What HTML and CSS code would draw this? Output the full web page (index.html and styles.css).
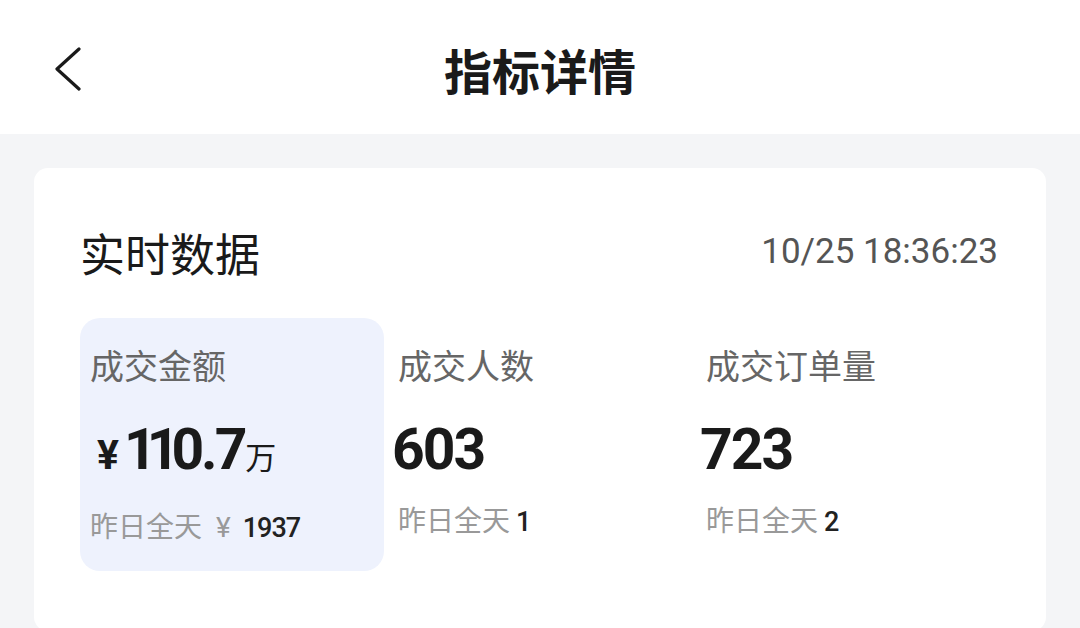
FILE: index.html
```html
<!DOCTYPE html>
<html lang="zh-CN">
<head>
    <meta charset="UTF-8">
    <meta name="viewport" content="width=device-width, initial-scale=1.0">
    <title>指标详情</title>
    <link rel="stylesheet" href="styles.css">
</head>
<body>
    <div class="topbar">
        <div class="back">
            <svg width="30" height="44" viewBox="0 0 30 44">
                <polyline points="25,2 3,22 25,42" fill="none" stroke="#1a1a1a" stroke-width="3.2" stroke-linecap="round" stroke-linejoin="round"/>
            </svg>
        </div>
        <h1>指标详情</h1>
        <div></div>
    </div>

    <div class="page">
        <div class="card">
            <div class="card-head">
                <h2>实时数据</h2>
                <span class="time">10/25 18:36:23</span>
            </div>
            <div class="metrics">
                <div class="metric active">
                    <div class="label">成交金额</div>
                    <div class="value"><span class="cur">¥</span><span class="narrow">11</span>0.7<span class="unit">万</span></div>
                    <div class="sub">昨日全天<span class="sym">¥</span><span class="num">1937</span></div>
                </div>
                <div class="metric">
                    <div class="label">成交人数</div>
                    <div class="value">603</div>
                    <div class="sub">昨日全天<span class="num">1</span></div>
                </div>
                <div class="metric">
                    <div class="label">成交订单量</div>
                    <div class="value">723</div>
                    <div class="sub">昨日全天<span class="num">2</span></div>
                </div>
            </div>
        </div>
    </div>
</body>
</html>
```

FILE: styles.css
```css
body {
    margin: 0;
    font-family: "Noto Sans CJK SC", "Noto Sans", sans-serif;
    background-color: #f4f5f7;
    color: #1a1a1a;
    height: 628px;
    overflow: hidden;
}
.topbar {
    display: grid;
    grid-template-columns: 1fr auto 1fr;
    align-items: center;
    height: 134px;
    background-color: #fff;
}
.topbar .back {
    padding-left: 54px;
    display: flex;
    align-items: center;
    padding-top: 4px;
}
.topbar h1 {
    margin: 0;
    font-size: 48px;
    font-weight: 700;
    line-height: 1;
    padding-top: 4px;
}
.page {
    padding: 34px 34px 0;
}
.card {
    background-color: #fff;
    border-radius: 14px;
    padding: 41px 48px 60px 46px;
}
.card-head {
    display: flex;
    justify-content: space-between;
    align-items: center;
    height: 84px;
}
.card-head h2 {
    margin: 0;
    font-size: 45px;
    font-weight: 400;
    line-height: 1;
    padding-top: 2px;
}
.card-head .time {
    font-family: Roboto, sans-serif;
    font-size: 35px;
    color: #555;
}
.metrics {
    display: grid;
    grid-template-columns: repeat(3, 1fr);
    margin-top: 25px;
}
.metric {
    height: 253px;
    box-sizing: border-box;
    padding: 23px 10px 0 12px;
    border-radius: 20px;
    margin-right: 2px;
}
.metric:last-child {
    padding-left: 14px;
}
.metric.active {
    background-color: #eef2fd;
    padding-left: 10px;
}
.metric .label {
    font-size: 34px;
    line-height: 48px;
    color: #666;
    margin-bottom: 26px;
}
.metric .value {
    font-family: Roboto, sans-serif;
    font-size: 57px;
    font-weight: 700;
    line-height: 70px;
    letter-spacing: -2px;
    margin-bottom: 14px;
    margin-left: -6px;
}
.metric.active .value {
    margin-left: 7px;
    letter-spacing: -3px;
}
.metric .value .cur {
    font-size: 41px;
    letter-spacing: 0;
    margin-right: 5px;
}
.metric .value .narrow {
    letter-spacing: -10px;
    margin-right: 2px;
}
.metric .value .unit {
    font-family: "Noto Sans CJK SC", sans-serif;
    font-size: 31px;
    font-weight: 400;
    letter-spacing: 0;
    margin-left: 1px;
}
.metric .sub {
    font-size: 28px;
    line-height: 40px;
    color: #999;
}
.metric .sub .sym {
    font-family: Roboto, sans-serif;
    margin: 0 12px 0 14px;
}
.metric .sub .num {
    font-family: Roboto, sans-serif;
    font-size: 27px;
    font-weight: 500;
    color: #222;
    letter-spacing: -1px;
    margin-left: 6px;
}
.metric .sub .sym + .num {
    margin-left: 0;
}
```
